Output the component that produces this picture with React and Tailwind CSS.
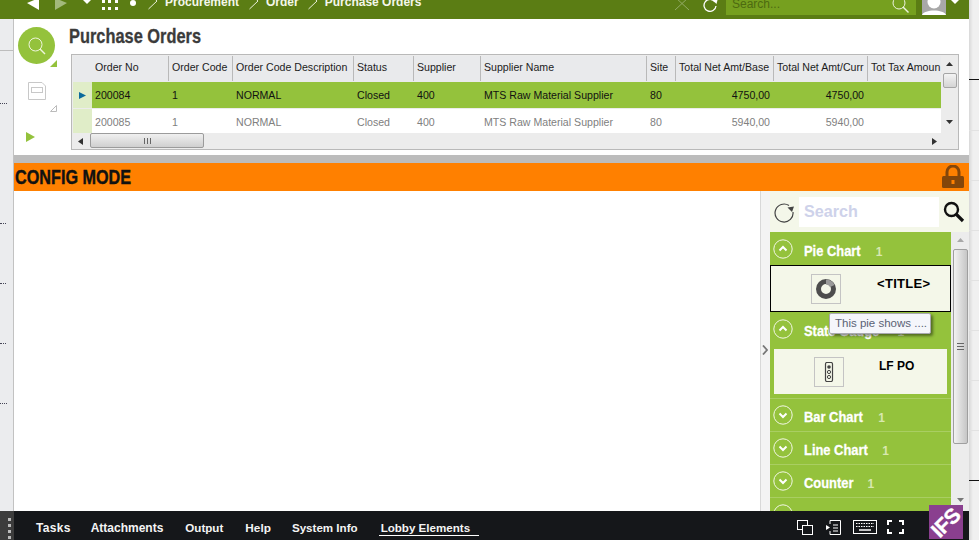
import React from "react";

const sans = { fontFamily: '"Liberation Sans", Arial, sans-serif' };
const cols = "grid-cols-[77px_64px_121px_60px_67px_166px_29px_98px_94px_74px]";
const headers = [
  "Order No", "Order Code", "Order Code Description", "Status", "Supplier",
  "Supplier Name", "Site", "Total Net Amt/Base", "Total Net Amt/Curr", "Tot Tax Amoun",
];
const rows = [
  ["200084", "1", "NORMAL", "Closed", "400", "MTS Raw Material Supplier", "80", "4750,00", "4750,00", ""],
  ["200085", "1", "NORMAL", "Closed", "400", "MTS Raw Material Supplier", "80", "5940,00", "5940,00", ""],
];

function Chevron({ up }) {
  return (
    <svg width="20" height="20" viewBox="0 0 20 20" className="shrink-0">
      <circle cx="10" cy="10" r="9.2" fill="none" stroke="#f2f7e4" strokeWidth="1" />
      <path d={up ? "M6.5 11.5 L10 8 L13.5 11.5" : "M6.5 8.5 L10 12 L13.5 8.5"} fill="none" stroke="#fff" strokeWidth="2" />
    </svg>
  );
}

function SectionHead({ up, label, gap, className = "h-[33px]" }) {
  return (
    <div className={`flex items-center shrink-0 pl-[3px] ${className}`}>
      <Chevron up={up} />
      <span className="ml-[11px] mt-[5px] text-[15px] font-bold text-white scale-x-[0.86] origin-left inline-block whitespace-nowrap [-webkit-text-stroke:0.3px_white]">{label}</span>
      <span className={`mt-[6px] text-[12px] font-bold text-[#d8e8b0] ${gap}`}>1</span>
    </div>
  );
}

function Breadcrumb({ label, className }) {
  return (
    <>
      <svg width="12" height="19" viewBox="0 0 12 19" className={className}>
        <path d="M1.5 -1 L10 7 L1.5 15" fill="none" stroke="#e8efd8" strokeWidth="1" transform="translate(0 -6)" />
      </svg>
      <span className="text-[12px] font-bold text-[#f4f7ea] leading-[19px] -mt-[7px] whitespace-nowrap">{label}</span>
    </>
  );
}

export default function App() {
  return (
    <div className="w-[979px] h-[540px] overflow-hidden flex bg-white" style={sans}>
      <div className="w-[969px] shrink-0 flex flex-col min-h-0">
        {/* top bar */}
        <div className="h-[19px] shrink-0 bg-[#5b7d14] flex items-start overflow-hidden">
          <svg width="14" height="12" viewBox="0 0 14 12" className="ml-[26px]"><path d="M13 -2 V10 L1 3 Z" fill="#fff" /></svg>
          <svg width="14" height="12" viewBox="0 0 14 12" className="ml-[14px]"><path d="M1 -2 V10 L13 3 Z" fill="#a3b97b" /></svg>
          <svg width="10" height="6" viewBox="0 0 10 6" className="ml-[14px]"><path d="M1 0 H9 L5 4 Z" fill="#fff" /></svg>
          <svg width="16" height="11" viewBox="0 0 16 11" className="ml-[10px]">
            <path d="M0 0h3v3H0zM6 0h3v3H6zM13 0h3v3h-3zM0 7h3v3H0zM6 7h3v3H6zM13 7h3v3h-3z" fill="#fff" />
          </svg>
          <svg width="8" height="8" viewBox="0 0 8 8" className="ml-[11px]"><circle cx="4" cy="3" r="3" fill="#fff" /></svg>
          <div className="ml-[10px] flex items-start">
            <Breadcrumb label="Procurement" className="mr-[6px]" />
            <Breadcrumb label="Order" className="ml-[9px] mr-[6px]" />
            <Breadcrumb label="Purchase Orders" className="ml-[8px] mr-[6px]" />
          </div>
          <div className="ml-auto flex items-start">
            <svg width="16" height="11" viewBox="0 0 16 11"><path d="M1 -3 L15 10 M15 -3 L1 10" stroke="#93aa66" strokeWidth="1" /></svg>
            <svg width="18" height="14" viewBox="0 0 18 14" className="ml-[11px]">
              <path d="M14 2 A6 6 0 1 0 15 6" fill="none" stroke="#fff" strokeWidth="1.3" />
              <path d="M11.5 0 L16.5 0 L15.5 4 Z" fill="#fff" />
            </svg>
            <div className="ml-[7px] w-[190px] h-[15px] bg-[#76a01f] flex items-start">
              <span className="text-[12px] leading-[8px] ml-[6px] text-[#4d6a10]">Search...</span>
              <svg width="18" height="15" viewBox="0 0 18 15" className="ml-auto mr-[6px]">
                <circle cx="7" cy="3" r="6" fill="none" stroke="#eef3df" strokeWidth="1" />
                <path d="M11 7 L16.5 12.5" stroke="#eef3df" strokeWidth="1.4" />
              </svg>
            </div>
            <div className="ml-[6px] w-[24px] h-[15px] overflow-hidden">
              <svg width="24" height="15" viewBox="0 0 24 15">
                <rect width="24" height="15" fill="#a8a8a8" />
                <circle cx="12" cy="2" r="6.5" fill="#fff" />
                <path d="M0 15 C2 9 22 9 24 15 Z" fill="#fff" />
              </svg>
            </div>
            <svg width="10" height="6" viewBox="0 0 10 6" className="ml-[4px] mr-[9px]"><path d="M1 0 H9 L5 4 Z" fill="#fff" /></svg>
          </div>
        </div>

        {/* body */}
        <div className="flex-1 flex min-h-0">
          {/* left strip */}
          <div className="w-[14px] shrink-0 bg-[#ebecee] border-r border-[#c2c2c2] flex flex-col">
            <div className="h-[32px] border-b border-[#bdbdbd]" />
            <div className="mt-[52px] h-px w-[7px] border-t border-dotted border-[#445]" />
            <div className="mt-[119px] h-px w-[6px] border-t border-dotted border-[#445]" />
            <div className="mt-[59px] h-px w-[6px] border-t border-dotted border-[#445]" />
            <div className="mt-[59px] h-px w-[6px] border-t border-dotted border-[#445]" />
            <div className="mt-[59px] h-px w-[7px] border-t border-dotted border-[#445]" />
          </div>

          {/* center */}
          <div className="w-[955px] shrink-0 flex flex-col min-h-0">
            {/* upper */}
            <div className="h-[136px] shrink-0 flex">
              <div className="w-[55px] shrink-0 relative flex flex-col items-start">
                <div className="mt-[8px] ml-[4px] w-[37px] h-[37px] rounded-full bg-[#94c23c] flex items-center justify-center">
                  <svg width="18" height="18" viewBox="0 0 18 18">
                    <circle cx="7.5" cy="7.5" r="6.5" fill="none" stroke="#eef5dc" strokeWidth="1" />
                    <path d="M12 12 L17 17" stroke="#eef5dc" strokeWidth="1.4" />
                  </svg>
                </div>
                <svg width="7" height="7" viewBox="0 0 7 7" className="absolute left-[36px] top-[41px]"><path d="M7 0 V7 H0 Z" fill="#94c23c" /></svg>
                <svg width="18" height="18" viewBox="0 0 18 18" className="mt-[18px] ml-[14px]">
                  <path d="M0.5 0.5 H14 L17.5 4 V17.5 H0.5 Z" fill="none" stroke="#c8c8c8" />
                  <rect x="3.5" y="5.5" width="11" height="5" fill="none" stroke="#c8c8c8" />
                </svg>
                <svg width="7" height="7" viewBox="0 0 7 7" className="absolute left-[36px] top-[86px]"><path d="M6.5 0.5 V6.5 H0.5 Z" fill="none" stroke="#bbb" /></svg>
                <svg width="9" height="10" viewBox="0 0 9 10" className="absolute left-[12px] top-[113px]"><path d="M0 0 L9 5 L0 10 Z" fill="#94c23c" /></svg>
              </div>
              <div className="flex-1 min-w-0">
                <div className="h-[35px] pt-[4px] text-[#3b3b3b] text-[21px] font-bold leading-[26px] whitespace-nowrap">
                  <span className="inline-block scale-x-[0.78] origin-left [-webkit-text-stroke:0.3px_#3b3b3b]">Purchase Orders</span>
                </div>
                {/* table */}
                <div className="ml-[2px] w-[888px] h-[96px] border border-[#b9b9b9] bg-[#ececec] p-px relative flex flex-col text-[10.6px] leading-none">
                  <div className="flex h-[26px] shrink-0">
                    <div className="w-[19px] shrink-0 bg-[#e9eaec]" />
                    <div className={`grid ${cols} w-[850px] bg-[#e9eaec] shrink-0 overflow-hidden`}>
                      {headers.map((h, i) => (
                        <div key={h} className={`flex items-center whitespace-nowrap overflow-hidden h-[25px] pb-[2px] pl-[3px] text-[#1c1c1c] ${i < 9 ? "border-r border-[#b9b9b9]" : ""}`}>{h}</div>
                      ))}
                    </div>
                  </div>
                  {rows.map((r, ri) => (
                    <div key={r[0]} className={`flex shrink-0 ${ri === 0 ? "h-[26px]" : "h-[24px] mt-px"}`}>
                      <div className="w-[19px] shrink-0 bg-[#e0edc8] flex items-center justify-center">
                        {ri === 0 && <svg width="7" height="7" viewBox="0 0 7 7"><path d="M0 0 L7 3.5 L0 7 Z" fill="#0b6a9c" /></svg>}
                      </div>
                      <div className={`grid ${cols} w-[850px] shrink-0 ${ri === 0 ? "bg-[#94c23c] text-[#111]" : "bg-white text-[#808080]"}`}>
                        {r.map((c, i) => (
                          <div key={i} className={`flex items-center whitespace-nowrap overflow-hidden pl-[3px] ${ri === 0 ? "pt-px" : "pt-[2px]"} ${i === 7 || i === 8 ? "justify-end pr-[4px]" : "pr-[3px]"}`}>{c}</div>
                        ))}
                      </div>
                    </div>
                  ))}
                  {/* horizontal scrollbar */}
                  <div className="flex items-center h-[16px] w-[869px] shrink-0 relative">
                    <svg width="6" height="7" viewBox="0 0 6 7" className="ml-[5px]"><path d="M5 0 V7 L0 3.5 Z" fill="#333" /></svg>
                    <div className="absolute left-[17px] top-0 w-[114px] h-[15px] rounded-[2px] border border-[#9b9b9b] bg-gradient-to-b from-[#f0f0f0] to-[#cfcfcf] flex items-center justify-center">
                      <div className="w-[7px] h-[6px] border-x-[1px] border-[#666] relative"><div className="absolute left-[2px] top-0 w-px h-[6px] bg-[#666]" /></div>
                    </div>
                    <svg width="6" height="7" viewBox="0 0 6 7" className="ml-auto mr-[5px]"><path d="M1 0 V7 L6 3.5 Z" fill="#333" /></svg>
                  </div>
                  {/* vertical scrollbar */}
                  <div className="absolute right-0 top-0 w-[17px] h-[78px] bg-[#ececec] flex flex-col items-center">
                    <svg width="7" height="5" viewBox="0 0 7 5" className="mt-[7px]"><path d="M0 4 L3.5 0 L7 4 Z" fill="#333" /></svg>
                    <div className="mt-[6px] w-[14px] h-[15px] rounded-[2px] border border-[#a5a5a5] bg-gradient-to-b from-[#f4f4f4] to-[#d4d4d4]" />
                    <svg width="7" height="5" viewBox="0 0 7 5" className="mt-auto mb-[8px]"><path d="M0 0 L7 0 L3.5 4 Z" fill="#333" /></svg>
                  </div>
                </div>
              </div>
            </div>
            <div className="h-[8px] shrink-0 bg-[#bcbcbc]" />
            {/* orange */}
            <div className="h-[28px] shrink-0 bg-[#ff8000] flex items-center pl-px pr-[5px]">
              <span className="text-[20px] font-bold text-[#111] leading-none whitespace-nowrap inline-block scale-x-[0.81] origin-left [-webkit-text-stroke:0.4px_#111]">CONFIG MODE</span>
              <svg width="22" height="24" viewBox="0 0 22 24" className="ml-auto">
                <path d="M5 11 V7 A6 6 0 0 1 17 7 V11" fill="none" stroke="#84460a" strokeWidth="3" />
                <rect x="0" y="11" width="22" height="12" rx="1.5" fill="#84460a" />
                <rect x="9.5" y="15" width="3" height="4" fill="#ff8000" />
              </svg>
            </div>
            {/* lobby */}
            <div className="flex-1 flex min-h-0">
              <div className="w-[746px] shrink-0 bg-white" />
              <div className="w-[10px] shrink-0 bg-[#f3f3f3] border-l border-[#d8d8d8] flex items-center pl-px">
                <svg width="6" height="10" viewBox="0 0 6 10" className="mt-[-2px]"><path d="M1 0.5 L5 5 L1 9.5" fill="none" stroke="#777" strokeWidth="1.8" /></svg>
              </div>
              <div className="flex-1 min-w-0 bg-[#f4f7e9] flex flex-col">
                <div className="h-[41px] shrink-0 flex items-center">
                  <svg width="22" height="22" viewBox="0 0 22 22" className="ml-[3px]">
                    <path d="M16 4.5 A9 9 0 1 0 20 11" fill="none" stroke="#444" strokeWidth="1.2" />
                    <path d="M14.5 6.5 L21 5.5 L19 11 Z" fill="#444" />
                  </svg>
                  <div className="ml-[4px] w-[140px] h-[30px] bg-white flex items-center pl-[5px] text-[17px] font-bold text-[#ced2ea]">
                    <span className="inline-block scale-x-[0.95] origin-left">Search</span>
                  </div>
                  <svg width="22" height="22" viewBox="0 0 22 22" className="ml-[4px]">
                    <circle cx="8.5" cy="8.5" r="6.5" fill="none" stroke="#111" strokeWidth="2.4" />
                    <path d="M13 13 L20 20" stroke="#111" strokeWidth="3.2" />
                  </svg>
                </div>
                <div className="flex-1 flex min-h-0">
                  <div className="w-[181px] shrink-0 bg-[#94c23c] relative overflow-hidden flex flex-col">
                    <SectionHead up label="Pie Chart" gap="ml-[6px]" />
                    <div className="h-[47px] shrink-0 bg-[#f4f7e9] border border-black flex relative">
                      <div className="ml-[40px] mt-[8px] w-[30px] h-[30px] border border-[#c4c4c4] flex items-center justify-center">
                        <svg width="20" height="20" viewBox="0 0 20 20">
                          <circle cx="10" cy="10" r="7.5" fill="none" stroke="#4d4d4d" strokeWidth="5" />
                          <path d="M10 0.5 A9.5 9.5 0 0 1 18.5 6 L14 8 A4.5 4.5 0 0 0 10 5.5 Z" fill="#9a9a9a" />
                        </svg>
                      </div>
                      <span className="absolute left-[106px] top-[8px] text-[13px] font-bold tracking-[0.3px] text-black whitespace-nowrap">&lt;TITLE&gt;</span>
                    </div>
                    <SectionHead up label="State Gauge" gap="ml-[6px]" className="h-[37px] pb-[3px]" />
                    <div className="mx-[4px] h-[45px] shrink-0 bg-[#f4f7e9] flex relative">
                      <div className="ml-[40px] mt-[8px] w-[30px] h-[30px] border border-[#c4c4c4] flex items-center justify-center">
                        <svg width="10" height="20" viewBox="0 0 10 20">
                          <rect x="1.5" y="0.5" width="7" height="19" rx="1.5" fill="none" stroke="#444" strokeWidth="1.2" />
                          <circle cx="5" cy="5" r="1.8" fill="#444" />
                          <circle cx="5" cy="10" r="1.6" fill="none" stroke="#444" />
                          <circle cx="5" cy="15" r="1.6" fill="none" stroke="#444" />
                        </svg>
                      </div>
                      <span className="absolute left-[105px] top-[8px] text-[12px] font-bold text-black whitespace-nowrap">LF PO</span>
                    </div>
                    <div className="mt-[4px] shrink-0 border-t border-[#a9ce62]"><SectionHead label="Bar Chart" gap="ml-[6px]" className="h-[32px]" /></div>
                    <div className="shrink-0 border-t border-[#a9ce62]"><SectionHead label="Line Chart" gap="ml-[4px]" className="h-[32px]" /></div>
                    <div className="shrink-0 border-t border-[#a9ce62]"><SectionHead label="Counter" gap="ml-[6px]" className="h-[32px]" /></div>
                    <div className="shrink-0 border-t border-[#a9ce62]"><SectionHead label="" gap="hidden" className="h-[32px]" /></div>
                    {/* tooltip */}
                    <div className="absolute left-[59px] top-[81px] w-[102px] h-[21px] bg-[#f5f6fb] border border-[#a8a8b0] rounded-[2px] shadow-[2px_2px_3px_rgba(0,0,0,0.45)] flex items-center pl-[5px] text-[11.5px] text-[#5a6275] whitespace-nowrap">
                      This pie shows ....
                    </div>
                  </div>
                  <div className="flex-1 bg-[#ececec] flex flex-col items-center relative">
                    <svg width="7" height="4" viewBox="0 0 7 4" className="mt-[6px]"><path d="M0 4 L3.5 0 L7 4 Z" fill="#a8a8a8" /></svg>
                    <div className="mt-[7px] w-[15px] h-[195px] rounded-[2px] border border-[#9f9f9f] bg-gradient-to-r from-[#f2f2f2] to-[#c6c6c6] flex items-center justify-center">
                      <div className="w-[7px] h-[7px] border-y border-[#666] relative"><div className="absolute left-0 top-[2px] h-px w-[7px] bg-[#666]" /></div>
                    </div>
                    <svg width="7" height="4" viewBox="0 0 7 4" className="absolute bottom-[9px]"><path d="M0 0 L7 0 L3.5 4 Z" fill="#777" /></svg>
                  </div>
                </div>
              </div>
            </div>
          </div>
        </div>

        {/* bottom bar */}
        <div className="h-[29px] shrink-0 bg-[#15171a] flex relative text-[12px] font-bold text-[#f4f4f4]">
          <div className="w-[14px] h-full bg-[#3c3c3c] flex flex-col items-end pr-[3px] pt-[7px] gap-[3px]">
            <i className="w-[3px] h-[3px] bg-[#bbb]" /><i className="w-[3px] h-[3px] bg-[#bbb]" /><i className="w-[3px] h-[3px] bg-[#bbb]" /><i className="w-[3px] h-[3px] bg-[#bbb]" />
          </div>
          <div className="ml-[22px] pt-[10px] flex items-start leading-[14px] whitespace-nowrap">
            <span className="tracking-[0.3px]">Tasks</span>
            <span className="ml-[20px]">Attachments</span>
            <span className="ml-[22px] text-[11.6px]">Output</span>
            <span className="ml-[22px] text-[11.8px]">Help</span>
            <span className="ml-[21px] text-[11.6px]">System Info</span>
            <span className="ml-[21px] pl-[2px] w-[100px] h-[15px] border-b border-white text-[11.6px]">Lobby Elements</span>
          </div>
          <div className="ml-auto flex items-center mr-[65px] pt-[3px]">
            <svg width="16" height="15" viewBox="0 0 16 15" className="mr-[13px]">
              <rect x="0.5" y="0.5" width="10" height="9" fill="none" stroke="#fff" />
              <rect x="5.5" y="5.5" width="10" height="9" fill="#15171a" stroke="#fff" />
            </svg>
            <svg width="15" height="15" viewBox="0 0 15 15" className="mr-[12px]">
              <path d="M4 4 V0.5 H14.5 V14.5 H4 V11" fill="none" stroke="#fff" />
              <path d="M0 5 L4 7.5 L0 10 Z" fill="#fff" />
              <path d="M7 5 H12 M7 8 H12 M7 11 H12" stroke="#fff" />
            </svg>
            <svg width="24" height="14" viewBox="0 0 24 14" className="mr-[10px]">
              <rect x="0.5" y="0.5" width="23" height="13" fill="none" stroke="#fff" />
              <path d="M3 3.5h18M3 6.5h18" stroke="#fff" strokeDasharray="1.5 1" />
              <path d="M6 10h12" stroke="#fff" strokeWidth="1.5" />
            </svg>
            <svg width="17" height="14" viewBox="0 0 17 14">
              <path d="M1 5 V1 H5 M12 1 H16 V5 M16 9 V13 H12 M5 13 H1 V9" fill="none" stroke="#fff" strokeWidth="2" />
            </svg>
          </div>
          <div className="absolute right-[6px] bottom-px w-[34px] h-[34px] bg-[#8a3f8f] overflow-hidden flex items-center justify-center">
            <span className="text-[21px] font-black text-white -rotate-45 leading-none tracking-tight [-webkit-text-stroke:0.4px_white]">IFS</span>
          </div>
        </div>
      </div>

      {/* right strip */}
      <div className="flex-1 bg-[linear-gradient(90deg,#d8d8d8,#f0f0f0_4px)] flex flex-col">
        <div className="mt-[79px] h-px bg-[#111]" />
        <div className="mt-[50px] h-px bg-[#e2e2e2]" />
        <div className="mt-[49px] h-px bg-[#e2e2e2]" />
        <div className="mt-[49px] h-px bg-[#e2e2e2]" />
        <div className="mt-[49px] h-px bg-[#e2e2e2]" />
        <div className="mt-[49px] h-px bg-[#e2e2e2]" />
        <div className="mt-[49px] h-px bg-[#e2e2e2]" />
        <div className="mt-[49px] h-px bg-[#e2e2e2]" />
        <div className="mt-[49px] h-px bg-[#111]" />
      </div>
    </div>
  );
}
